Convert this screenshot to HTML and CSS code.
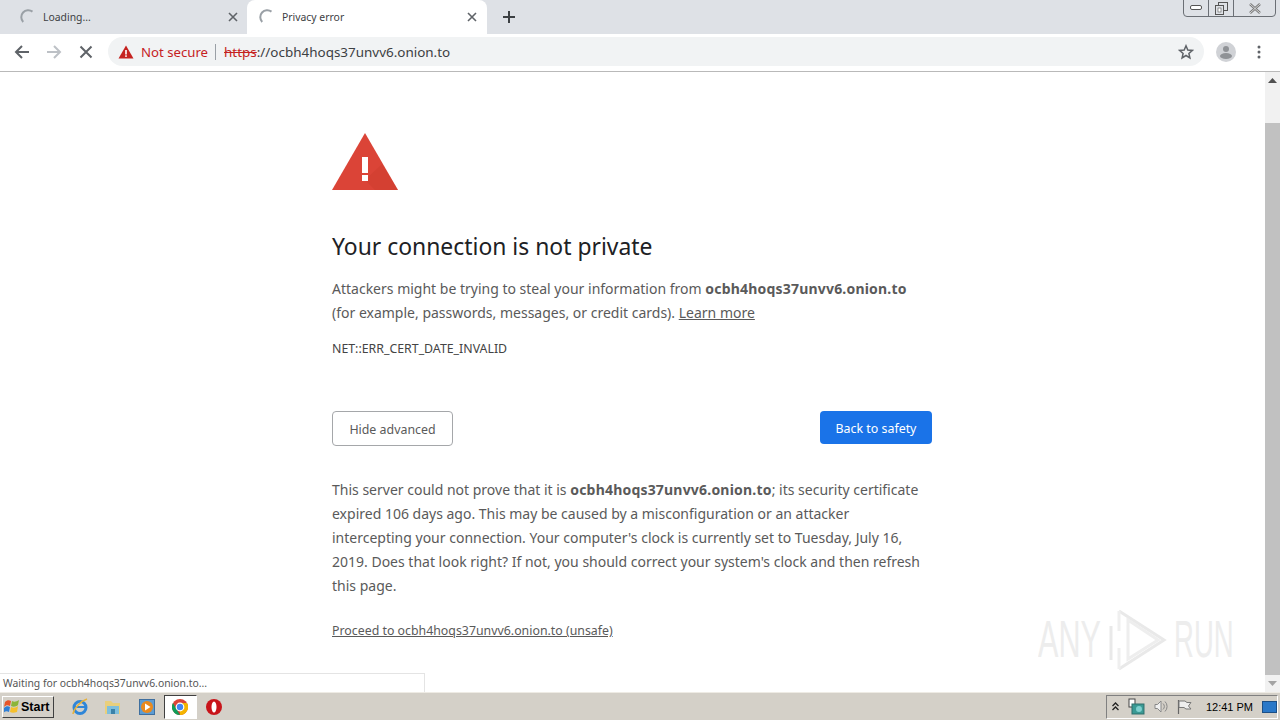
FILE: index.html
```html
<!DOCTYPE html>
<html>

<head>
    <meta charset="UTF-8">
    <title>Privacy error</title>
    <link rel="stylesheet" href="styles.css">
</head>

<body>
    <div class="browser">
        <!-- tabs -->
        <div class="tabstrip">
            <div class="tab">
                <svg class="spinner" width="16" height="16" viewBox="0 0 16 16"><path d="M12.5 2.6A7 7 0 0 0 3.2 13" fill="none" stroke="#9aa0a6" stroke-width="2"/></svg>
                <span class="tab-title">Loading...</span>
                <svg class="tab-close" width="10" height="10" viewBox="0 0 10 10"><path d="M1 1l8 8M9 1l-8 8" stroke="#5f6368" stroke-width="1.6"/></svg>
            </div>
            <div class="tab tab-active">
                <svg class="spinner" width="16" height="16" viewBox="0 0 16 16"><path d="M12.5 2.6A7 7 0 0 0 3.2 13" fill="none" stroke="#9aa0a6" stroke-width="2"/></svg>
                <span class="tab-title">Privacy error</span>
                <svg class="tab-close" width="10" height="10" viewBox="0 0 10 10"><path d="M1 1l8 8M9 1l-8 8" stroke="#5f6368" stroke-width="1.6"/></svg>
            </div>
            <svg class="new-tab" width="12" height="12" viewBox="0 0 12 12"><path d="M6 0v12M0 6h12" stroke="#3c4043" stroke-width="2"/></svg>
            <div class="win-buttons">
                <div class="win-btn win-min"><svg width="12" height="6" viewBox="0 0 12 6"><rect x="0.5" y="0.5" width="11" height="4" rx="1.5" fill="#fff" stroke="#555"/></svg></div>
                <div class="win-btn win-max"><svg width="13" height="13" viewBox="0 0 13 13"><rect x="3.5" y="0.5" width="9" height="8" fill="none" stroke="#555"/><rect x="0.5" y="3.5" width="8" height="9" fill="#dee1e6" stroke="#555"/><rect x="3" y="6" width="3" height="4" fill="#fff" stroke="#555" stroke-width="0.6"/></svg></div>
                <div class="win-btn win-close"><svg width="14" height="11" viewBox="0 0 14 11"><path d="M2 1l10 9M12 1L2 10" stroke="#777" stroke-width="2.4"/><path d="M2 1l10 9M12 1L2 10" stroke="#eee" stroke-width="0.8"/></svg></div>
            </div>
        </div>

        <!-- toolbar -->
        <div class="toolbar">
            <svg class="nav-icon" width="16" height="16" viewBox="0 0 16 16"><path d="M15 8H2M8 2L2 8l6 6" fill="none" stroke="#5f6368" stroke-width="2"/></svg>
            <svg class="nav-icon" width="16" height="16" viewBox="0 0 16 16"><path d="M1 8h13M8 2l6 6-6 6" fill="none" stroke="#bdc1c6" stroke-width="2"/></svg>
            <svg class="nav-icon" width="16" height="16" viewBox="0 0 16 16"><path d="M2.500 2.500l11 11M13.500 2.500l-11 11" stroke="#5f6368" stroke-width="2"/></svg>
            <div class="omnibox">
                <svg class="warn-small" width="16" height="14" viewBox="0 0 16 14"><path d="M8 0.500L15.500 13.500H0.500z" fill="#c5221f"/><rect x="7.200" y="5" width="1.600" height="4.500" fill="#fff"/><rect x="7.200" y="10.300" width="1.600" height="1.600" fill="#fff"/></svg>
                <span class="not-secure">Not secure</span>
                <span class="omni-sep"></span>
                <span class="url"><span class="scheme">https</span>://ocbh4hoqs37unvv6.onion.to</span>
                <svg class="star" width="16" height="16" viewBox="0 0 16 16"><path d="M8 1.800l1.800 4.200 4.500.4-3.400 3 1 4.500L8 11.500l-3.900 2.400 1-4.500-3.400-3 4.500-.4z" fill="none" stroke="#5f6368" stroke-width="1.500"/></svg>
            </div>
            <svg class="avatar" width="20" height="20" viewBox="0 0 20 20"><circle cx="10" cy="10" r="10" fill="#d0d2d6"/><circle cx="10" cy="7" r="3" fill="#8f9296"/><ellipse cx="10" cy="14" rx="6" ry="3" fill="#8f9296"/></svg>
            <svg class="menu-dots" width="4" height="14" viewBox="0 0 4 14"><circle cx="2" cy="2" r="1.500" fill="#5f6368"/><circle cx="2" cy="7" r="1.500" fill="#5f6368"/><circle cx="2" cy="12" r="1.500" fill="#5f6368"/></svg>
        </div>

        <!-- page -->
        <div class="viewport">
            <div class="page">
                <div class="interstitial">
                    <svg class="warn-big" width="66" height="57" viewBox="0 0 66 57"><path d="M33 0L66 57H0z" fill="#db4437"/><path d="M36 44l-3 3 10 10h23L50 31z" fill="#c53929" opacity=".3"/><rect x="30" y="24" width="6" height="16" fill="#fff"/><rect x="30" y="42" width="6" height="6" fill="#fff"/></svg>
                    <h1 class="headline">Your connection is not private</h1>
                    <p class="body-text">Attackers might be trying to steal your information from <strong>ocbh4hoqs37unvv6.onion.to</strong> (for example, passwords, messages, or credit cards). <a class="link" href="#">Learn more</a></p>
                    <div class="error-code">NET::ERR_CERT_DATE_INVALID</div>
                    <div class="button-row">
                        <button class="btn btn-secondary">Hide advanced</button>
                        <button class="btn btn-primary">Back to safety</button>
                    </div>
                    <p class="body-text">This server could not prove that it is <strong>ocbh4hoqs37unvv6.onion.to</strong>; its security certificate expired 106 days ago. This may be caused by a misconfiguration or an attacker intercepting your connection. Your computer's clock is currently set to Tuesday, July 16, 2019. Does that look right? If not, you should correct your system's clock and then refresh this page.</p>
                    <a class="proceed" href="#">Proceed to ocbh4hoqs37unvv6.onion.to (unsafe)</a>
                </div>
                <div class="status-bubble">Waiting for ocbh4hoqs37unvv6.onion.to...</div>
                <div class="watermark">
                    <span class="wm-word">ANY</span>
                    <svg class="wm-logo" width="60" height="64" viewBox="0 0 60 64"><path d="M3 18v34M11 3l45 29-45 29" fill="none" stroke="#e9e9e9" stroke-width="3"/><path d="M20 12l30 20-30 19z" fill="none" stroke="#eeeeee" stroke-width="3"/><path d="M11 3v20M11 40v21" fill="none" stroke="#efefef" stroke-width="3"/></svg>
                    <span class="wm-word wm-run">RUN</span>
                </div>
            </div>
            <div class="scrollbar">
                <div class="scroll-arrow"><svg width="9" height="5" viewBox="0 0 9 5"><path d="M4.500 0L9 5H0z" fill="#505050"/></svg></div>
                <div class="scroll-thumb"></div>
                <div class="scroll-arrow"><svg width="9" height="5" viewBox="0 0 9 5"><path d="M0 0h9L4.500 5z" fill="#a3a3a3"/></svg></div>
            </div>
        </div>

        <!-- windows taskbar -->
        <div class="taskbar">
            <div class="start-btn">
                <svg width="16" height="15" viewBox="0 0 16 15"><path d="M1 3c2-2 4-2 6-1l-1 5C4 6 2 6 0 8z" fill="#e8562a"/><path d="M8 2c2 1 4 1 7-1l-1 5c-2 2-5 2-7 1z" fill="#8cb53a"/><path d="M0 9c2-2 4-2 6-1l-1 5c-2-1-4-1-6 1z" fill="#2f7fd6"/><path d="M7 8c2 1 5 1 7-1l-1 6c-3 1-5 1-7 0z" fill="#f6c02c"/></svg>
                <span>Start</span>
            </div>
            <div class="quick-launch">
                <span class="task-icon"><svg width="18" height="18" viewBox="0 0 18 18"><circle cx="9" cy="9.500" r="6" fill="none" stroke="#2f86d8" stroke-width="3"/><path d="M4 9h10" stroke="#2f86d8" stroke-width="2"/><path d="M2 16C3 10 10 3 16 1" fill="none" stroke="#e8b23a" stroke-width="1.500"/></svg></span>
                <span class="task-icon"><svg width="16" height="15" viewBox="0 0 16 15"><path d="M0 2h6l2 2h7v11H0z" fill="#e9cf7c"/><rect x="2" y="7" width="12" height="8" fill="#7fbfdc"/><rect x="6" y="10" width="4" height="5" fill="#3b82a8"/></svg></span>
                <span class="task-icon"><svg width="16" height="16" viewBox="0 0 16 16"><rect x="0.500" y="0.500" width="15" height="15" fill="#5d9cd3" stroke="#3f6f9f"/><circle cx="8" cy="8" r="6" fill="#ea8a1e"/><path d="M6 4.500l5.500 3.500L6 11.500z" fill="#fff"/></svg></span>
                <span class="task-icon task-active"><svg width="16" height="16" viewBox="0 0 16 16"><circle cx="8" cy="8" r="8" fill="#db4437"/><path d="M8 16A8 8 0 0 0 15 4H8z" fill="#f4b400"/><path d="M8 16A8 8 0 0 1 1 4l4 7z" fill="#0f9d58"/><circle cx="8" cy="8" r="3.800" fill="#4285f4" stroke="#fff" stroke-width="1.200"/></svg></span>
                <span class="task-icon"><svg width="16" height="16" viewBox="0 0 16 16"><circle cx="8" cy="8" r="8" fill="#c8141a"/><ellipse cx="8" cy="8" rx="2.500" ry="5.500" fill="#fff"/></svg></span>
            </div>
            <div class="tray">
                <svg width="7" height="9" viewBox="0 0 7 9"><path d="M0.500 4l3-3 3 3M0.500 8l3-3 3 3" fill="none" stroke="#222" stroke-width="1.300"/></svg>
                <svg width="17" height="17" viewBox="0 0 17 17"><rect x="1" y="1" width="6" height="8" fill="#fff" stroke="#444"/><rect x="4" y="6" width="12" height="10" fill="#3a9a94" stroke="#2e6f6c"/><circle cx="11" cy="11" r="3" fill="#7fd0cf"/></svg>
                <svg width="14" height="13" viewBox="0 0 14 13"><path d="M1 4.500h2.500L7 1v11L3.500 8.500H1z" fill="#f0f0f0" stroke="#888"/><path d="M9 3.500a4 4 0 0 1 0 6M11 1.500a7 7 0 0 1 0 10" fill="none" stroke="#888"/></svg>
                <svg width="15" height="14" viewBox="0 0 15 14"><path d="M1.500 0v14" stroke="#666" stroke-width="1.200"/><path d="M2 1h6l2 1.500h4L11.500 6 14 9H9L7 7.500H2z" fill="#eee" stroke="#777"/></svg>
                <span class="clock">12:41 PM</span>
                <span class="show-desktop"></span>
            </div>
        </div>
    </div>
</body>

</html>
```

FILE: styles.css
```css
* {
    box-sizing: border-box;
}

html,
body {
    margin: 0;
    height: 100%;
    overflow: hidden;
}

body {
    font-family: "Noto Sans", "Open Sans", sans-serif;
    color: #5a5a5a;
    background: #fff;
}

.browser {
    display: flex;
    flex-direction: column;
    width: 1280px;
    height: 720px;
}

/* tabs */
.tabstrip {
    position: relative;
    display: flex;
    align-items: center;
    height: 34px;
    padding-left: 8px;
    background: #dee1e6;
    flex-shrink: 0;
}

.tab {
    display: flex;
    align-items: center;
    width: 240px;
    height: 34px;
    padding: 0 10px 0 12px;
    font-size: 10.4px;
    color: #3c4043;
}

.tab-active {
    background: #fff;
    width: 240px;
    margin-left: -1px;
    border-radius: 8px 8px 0 0;
}

.spinner {
    margin-right: 7px;
}

.tab-title {
    flex: 1;
    margin-top: -1px;
}

.new-tab {
    margin-left: 16px;
}

.win-buttons {
    position: absolute;
    top: -1px;
    right: 4px;
    display: flex;
    width: 93px;
    height: 18px;
    border: 1px solid #6b6f75;
    border-radius: 0 0 4px 4px;
}

.win-btn {
    display: flex;
    align-items: center;
    justify-content: center;
    width: 25px;
    border-right: 1px solid #6b6f75;
}

.win-close {
    flex: 1;
    border-right: 0;
}

/* toolbar */
.toolbar {
    display: flex;
    align-items: center;
    height: 38px;
    padding: 0 0 2px 14px;
    background: #fff;
    border-bottom: 1px solid #b9b9b9;
    flex-shrink: 0;
}

.nav-icon {
    margin-right: 16px;
}

.omnibox {
    display: flex;
    align-items: center;
    width: 1096px;
    height: 29px;
    margin-left: -2px;
    padding: 0 10px;
    border-radius: 15px;
    background: #f1f3f4;
    font-size: 13.45px;
}

.not-secure {
    margin-left: 7px;
    font-size: 13.2px;
    color: #c5221f;
}

.omni-sep {
    width: 1px;
    height: 16px;
    margin: 0 8px 0 7px;
    background: #9aa0a6;
}

.url {
    flex: 1;
    color: #3c4043;
}

.scheme {
    color: #c5221f;
    text-decoration: line-through;
}

.avatar {
    margin-left: 12px;
}

.menu-dots {
    margin-left: 21px;
}

/* page */
.viewport {
    display: flex;
    flex: 1;
    min-height: 0;
}

.page {
    position: relative;
    flex: 1;
    background: #fff;
}

.interstitial {
    width: 600px;
    margin-left: 332px;
    padding-top: 61px;
}

.warn-big {
    display: block;
}

.headline {
    margin: 41px 0 0;
    font-size: 22.9px;
    font-weight: 400;
    line-height: 32px;
    color: #202124;
}

.body-text {
    margin: 14px 0 0;
    font-size: 14px;
    line-height: 24px;
}

.body-text strong {
    font-weight: 700;
    letter-spacing: 0.2px;
}

.link {
    color: #5a5a5a;
}

.error-code {
    margin-top: 16px;
    font-size: 12.35px;
    line-height: 16px;
    color: #444;
}

.button-row {
    display: flex;
    justify-content: space-between;
    align-items: flex-start;
    margin-top: 54px;
    margin-bottom: 32px;
}

.btn {
    padding-top: 2px;
    font-family: inherit;
    font-size: 12.4px;
    border-radius: 4px;
}

.btn-secondary {
    width: 121px;
    height: 35px;
    background: #fff;
    border: 1px solid #a5a7aa;
    color: #5a5a5a;
}

.btn-primary {
    width: 112px;
    height: 33px;
    background: #1a73e8;
    border: 0;
    color: #fff;
}

.proceed {
    display: block;
    margin-top: 24px;
    font-size: 12.35px;
    line-height: 18px;
    color: #5a5a5a;
}

.status-bubble {
    position: absolute;
    left: 0;
    bottom: 0;
    width: 425px;
    height: 19px;
    padding-left: 3px;
    border: 1px solid #e4e4e4;
    border-left: 0;
    border-bottom: 0;
    background: #fff;
    font-size: 10.4px;
    line-height: 18px;
    color: #555;
}

.watermark {
    position: absolute;
    left: 1038px;
    top: 536px;
    display: flex;
    align-items: center;
    gap: 6px;
    font-family: "Liberation Sans", sans-serif;
    font-size: 51px;
    color: #ededed;
}

.wm-word {
    display: block;
    width: 64px;
    line-height: 64px;
    transform: scaleX(0.6);
    transform-origin: left center;
}

.wm-run {
    transform: scaleX(0.54);
}

/* scrollbar */
.scrollbar {
    display: flex;
    flex-direction: column;
    width: 15px;
    background: #f1f1f1;
}

.scroll-arrow {
    display: flex;
    align-items: center;
    justify-content: center;
    height: 17px;
    flex-shrink: 0;
}

.scroll-thumb {
    flex: 1;
    margin-top: 34px;
    background: #c1c1c1;
}

/* windows taskbar */
.taskbar {
    display: flex;
    align-items: center;
    height: 28px;
    background: #d4d0c8;
    border-top: 1px solid #eeebe4;
    flex-shrink: 0;
}

.start-btn {
    display: flex;
    align-items: center;
    gap: 1px;
    width: 52px;
    height: 22px;
    margin-left: 2px;
    padding-left: 1px;
    border: 1px solid;
    border-color: #fff #404040 #404040 #fff;
    font-family: "Liberation Sans", sans-serif;
    font-size: 12.5px;
    font-weight: 700;
    color: #000;
}

.quick-launch {
    display: flex;
    align-items: center;
    margin-left: 9px;
    flex: 1;
}

.task-icon {
    display: flex;
    align-items: center;
    justify-content: center;
    width: 33.5px;
    height: 24px;
}

.task-active {
    background: #fff;
    border: 1px solid;
    border-color: #404040 #fff #fff #404040;
}

.tray {
    display: flex;
    align-items: center;
    gap: 9px;
    width: 172px;
    height: 24px;
    margin-right: 2px;
    padding-left: 5px;
    border: 1px solid;
    border-color: #808080 #fff #fff #808080;
}

.clock {
    margin-left: 5px;
    font-family: "Liberation Sans", sans-serif;
    font-size: 11px;
    white-space: nowrap;
    color: #000;
}

.show-desktop {
    width: 15px;
    height: 12px;
    flex-shrink: 0;
    background: #2a78c8;
    border: 1px solid #1c4f86;
}
```
